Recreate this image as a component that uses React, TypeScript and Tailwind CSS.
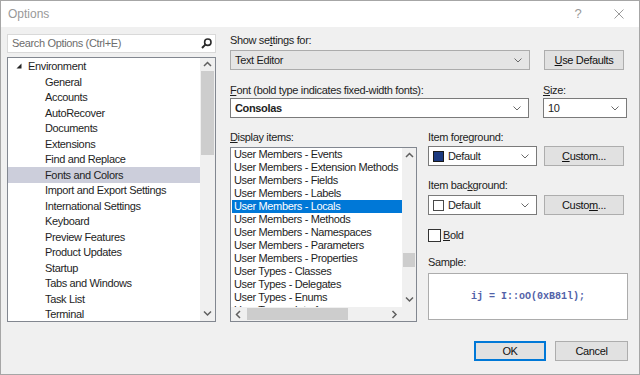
import { useState } from "react";

const treeItems = [
  "General",
  "Accounts",
  "AutoRecover",
  "Documents",
  "Extensions",
  "Find and Replace",
  "Fonts and Colors",
  "Import and Export Settings",
  "International Settings",
  "Keyboard",
  "Preview Features",
  "Product Updates",
  "Startup",
  "Tabs and Windows",
  "Task List",
  "Terminal",
];

const displayItems = [
  "User Members - Events",
  "User Members - Extension Methods",
  "User Members - Fields",
  "User Members - Labels",
  "User Members - Locals",
  "User Members - Methods",
  "User Members - Namespaces",
  "User Members - Parameters",
  "User Members - Properties",
  "User Types - Classes",
  "User Types - Delegates",
  "User Types - Enums",
  "User Types - Interfaces",
];

const font = "font-['Liberation_Sans',Arial,sans-serif] text-[11px] tracking-[-0.35px]";

function Chevron() {
  return (
    <svg width="8" height="5" viewBox="0 0 8 5">
      <path d="M0.5 0.5 L4 4 L7.5 0.5" fill="none" stroke="#6a6a6a" strokeWidth="1" />
    </svg>
  );
}

// flechas de las barras de desplazamiento
function Arrow({ dir }: { dir: "up" | "down" | "left" | "right" }) {
  const d = {
    up: "M1 5 L4.5 1.5 L8 5",
    down: "M1 1.5 L4.5 5 L8 1.5",
    left: "M5 1 L1.5 4.5 L5 8",
    right: "M1.5 1 L5 4.5 L1.5 8",
  }[dir];
  const horiz = dir === "left" || dir === "right";
  return (
    <svg width={horiz ? 7 : 9} height={horiz ? 9 : 7} viewBox={horiz ? "0 0 7 9" : "0 0 9 7"}>
      <path d={d} fill="none" stroke="#606060" strokeWidth="1.5" />
    </svg>
  );
}

function Combo({ children, className = "", gray = false }: { children: React.ReactNode; className?: string; gray?: boolean }) {
  return (
    <div
      className={`h-[20px] flex items-center justify-between border pl-[4px] pr-[7px] ${
        gray ? "bg-[#e5e5e5] border-[#acacac]" : "bg-white border-[#7a7a7a]"
      } ${className}`}
    >
      <div className="flex items-center gap-[4px]">{children}</div>
      <Chevron />
    </div>
  );
}

function Button({ children, className = "" }: { children: React.ReactNode; className?: string }) {
  return (
    <button className={`h-[20px] flex items-center justify-center bg-[#e1e1e1] border border-[#adadad] text-[#111] ${className}`}>
      {children}
    </button>
  );
}

export default function App() {
  const [selectedTree, setSelectedTree] = useState("Fonts and Colors");
  const [selectedItem, setSelectedItem] = useState("User Members - Locals");
  const [bold, setBold] = useState(false);

  return (
    <div className={`w-[640px] h-[375px] flex flex-col bg-[#f0f0f0] border border-[#a6a6a6] text-[#1e1e1e] ${font}`}>
      {/* Barra de titulo */}
      <div className="h-[26px] bg-white flex items-center justify-between pl-[7px] shrink-0">
        <span className="text-[12px] text-[#999999] tracking-normal">Options</span>
        <div className="flex items-center">
          <span className="w-[20px] mr-[11px] text-center text-[13px] text-[#999999] tracking-normal">?</span>
          <span className="w-[40px] flex justify-center">
            <svg width="10" height="10" viewBox="0 0 10 10">
              <path d="M0.5 0.5 L9.5 9.5 M9.5 0.5 L0.5 9.5" stroke="#9a9a9a" strokeWidth="1" />
            </svg>
          </span>
        </div>
      </div>

      <div className="flex flex-1">
        {/* Columna izquierda */}
        <div className="ml-[6px] mt-[7px] w-[209px] flex flex-col">
          <div className="h-[19px] bg-white border border-[#d9d9d9] flex items-center justify-between pl-[4px] pr-[3px]">
            <span className="text-[#6d6d6d]">Search Options (Ctrl+E)</span>
            <svg width="11" height="11" viewBox="0 0 11 11">
              <circle cx="6.8" cy="4.2" r="3.2" fill="none" stroke="#2b2b2b" strokeWidth="1.6" />
              <path d="M4.6 6.4 L1 10" stroke="#2b2b2b" strokeWidth="2" />
            </svg>
          </div>
          <div className="mt-[4px] h-[265px] bg-white border border-[#828790] flex">
            <div className="flex-1 pt-[0.5px] overflow-hidden">
              <div className="h-[15.5px] flex items-center pl-[8px]">
                <svg width="6" height="6" viewBox="0 0 6 6" className="mr-[6px]">
                  <path d="M5.5 0.5 L5.5 5.5 L0.5 5.5 Z" fill="#262626" />
                </svg>
                <span>Environment</span>
              </div>
              {treeItems.map((item) => (
                <div
                  key={item}
                  onClick={() => setSelectedTree(item)}
                  className={`h-[15.5px] flex items-center pl-[37px] whitespace-nowrap ${
                    selectedTree === item ? "bg-[#cccedb]" : ""
                  }`}
                >
                  {item}
                </div>
              ))}
            </div>
            <div className="w-[15px] bg-[#f0f0f0] flex flex-col">
              <div className="h-[13px] flex items-center justify-center">
                <Arrow dir="up" />
              </div>
              <div className="h-[84px] mx-[1px] bg-[#cdcdcd]" />
              <div className="flex-1" />
              <div className="h-[15px] flex items-center justify-center">
                <Arrow dir="down" />
              </div>
            </div>
          </div>
        </div>

        {/* Columna derecha */}
        <div className="ml-[14px] w-[398px] flex flex-col">
          <div className="mt-[7px] h-[13px] leading-[13px]">
            Show se<u>t</u>tings for:
          </div>
          <div className="mt-[3px] flex gap-[14px]">
            <Combo gray className="w-[300px]">
              <span>Text Editor</span>
            </Combo>
            <Button className="w-[80px]">
              <u>U</u>se Defaults
            </Button>
          </div>

          <div className="mt-[14px] flex gap-[14px]">
            <div className="flex flex-col">
              <div className="h-[13px] leading-[13px]">
                <u>F</u>ont (bold type indicates fixed-width fonts):
              </div>
              <Combo className="mt-[1px] w-[299px]">
                <span className="font-bold">Consolas</span>
              </Combo>
            </div>
            <div className="flex flex-col">
              <div className="h-[13px] leading-[13px]">
                <u>S</u>ize:
              </div>
              <Combo className="mt-[1px] w-[84px]">
                <span>10</span>
              </Combo>
            </div>
          </div>

          <div className="mt-[13px] flex gap-[11px]">
            {/* Lista de elementos */}
            <div className="w-[187px] flex flex-col">
              <div className="h-[13px] leading-[13px]">
                <u>D</u>isplay items:
              </div>
              <div className="mt-[3px] h-[175px] bg-white border border-[#828790] flex flex-col">
                <div className="h-[159px] flex">
                  <div className="flex-1 overflow-hidden">
                    {displayItems.map((item) => (
                      <div
                        key={item}
                        onClick={() => setSelectedItem(item)}
                        className={`h-[13px] leading-[13px] pl-[2px] ml-[1px] whitespace-nowrap ${
                          selectedItem === item ? "bg-[#0078d7] text-white" : ""
                        }`}
                      >
                        {item}
                      </div>
                    ))}
                  </div>
                  <div className="w-[14px] bg-[#f0f0f0] flex flex-col">
                    <div className="h-[15px] flex items-center justify-center">
                      <Arrow dir="up" />
                    </div>
                    <div className="h-[90px]" />
                    <div className="h-[14px] mx-[1px] bg-[#cdcdcd]" />
                    <div className="flex-1" />
                    <div className="h-[15px] flex items-center justify-center">
                      <Arrow dir="down" />
                    </div>
                  </div>
                </div>
                <div className="flex-1 flex">
                  <div className="flex-1 bg-[#f0f0f0] flex items-center">
                    <div className="w-[15px] flex justify-center">
                      <Arrow dir="left" />
                    </div>
                    <div className="ml-[1px] w-[101px] h-[12px] bg-[#cdcdcd]" />
                    <div className="flex-1" />
                    <div className="w-[15px] flex justify-center">
                      <Arrow dir="right" />
                    </div>
                  </div>
                  <div className="w-[14px] bg-[#f0f0f0]" />
                </div>
              </div>
            </div>

            {/* Colores y muestra */}
            <div className="w-[200px] flex flex-col">
              <div className="h-[13px] leading-[13px]">
                Item fo<u>r</u>eground:
              </div>
              <div className="mt-[2px] flex gap-[7px]">
                <Combo className="w-[109px]">
                  <span className="w-[11px] h-[11px] bg-[#1c3a80] border border-[#1a1a1a]" />
                  <span>Default</span>
                </Combo>
                <Button className="w-[80px]">
                  <u>C</u>ustom...
                </Button>
              </div>

              <div className="mt-[13px] h-[13px] leading-[13px]">
                Item bac<u>k</u>ground:
              </div>
              <div className="mt-[3px] flex gap-[7px]">
                <Combo className="w-[109px]">
                  <span className="w-[11px] h-[11px] bg-white border border-[#4a4a4a]" />
                  <span>Default</span>
                </Combo>
                <Button className="w-[80px]">
                  Custo<u>m</u>...
                </Button>
              </div>

              <label className="mt-[14px] h-[13px] flex items-center gap-[2px] cursor-default">
                <span
                  onClick={() => setBold(!bold)}
                  className="w-[13px] h-[13px] bg-white border border-[#333333] flex items-center justify-center"
                >
                  {bold && (
                    <svg width="9" height="9" viewBox="0 0 9 9">
                      <path d="M1 4.5 L3.5 7 L8 1.5" fill="none" stroke="#333" strokeWidth="1.3" />
                    </svg>
                  )}
                </span>
                <span className="leading-[13px]">
                  <u>B</u>old
                </span>
              </label>

              <div className="mt-[14px] h-[13px] leading-[13px]">Sample:</div>
              <div className="mt-[4px] h-[47px] bg-white border border-[#acacac] flex items-center justify-center">
                <span className={`font-['Liberation_Mono',monospace] text-[10px] tracking-normal text-[#5262a8] ${bold ? "font-bold" : "font-semibold"}`}>
                  ij = I::oO(0xB81l);
                </span>
              </div>
            </div>
          </div>

          {/* Botones */}
          <div className="mt-[19px] flex justify-end gap-[9px]">
            <Button className="w-[72px] !border-[#0078d7] shadow-[inset_0_0_0_1px_#0078d7]">OK</Button>
            <Button className="w-[73px]">Cancel</Button>
          </div>
        </div>
      </div>
    </div>
  );
}
